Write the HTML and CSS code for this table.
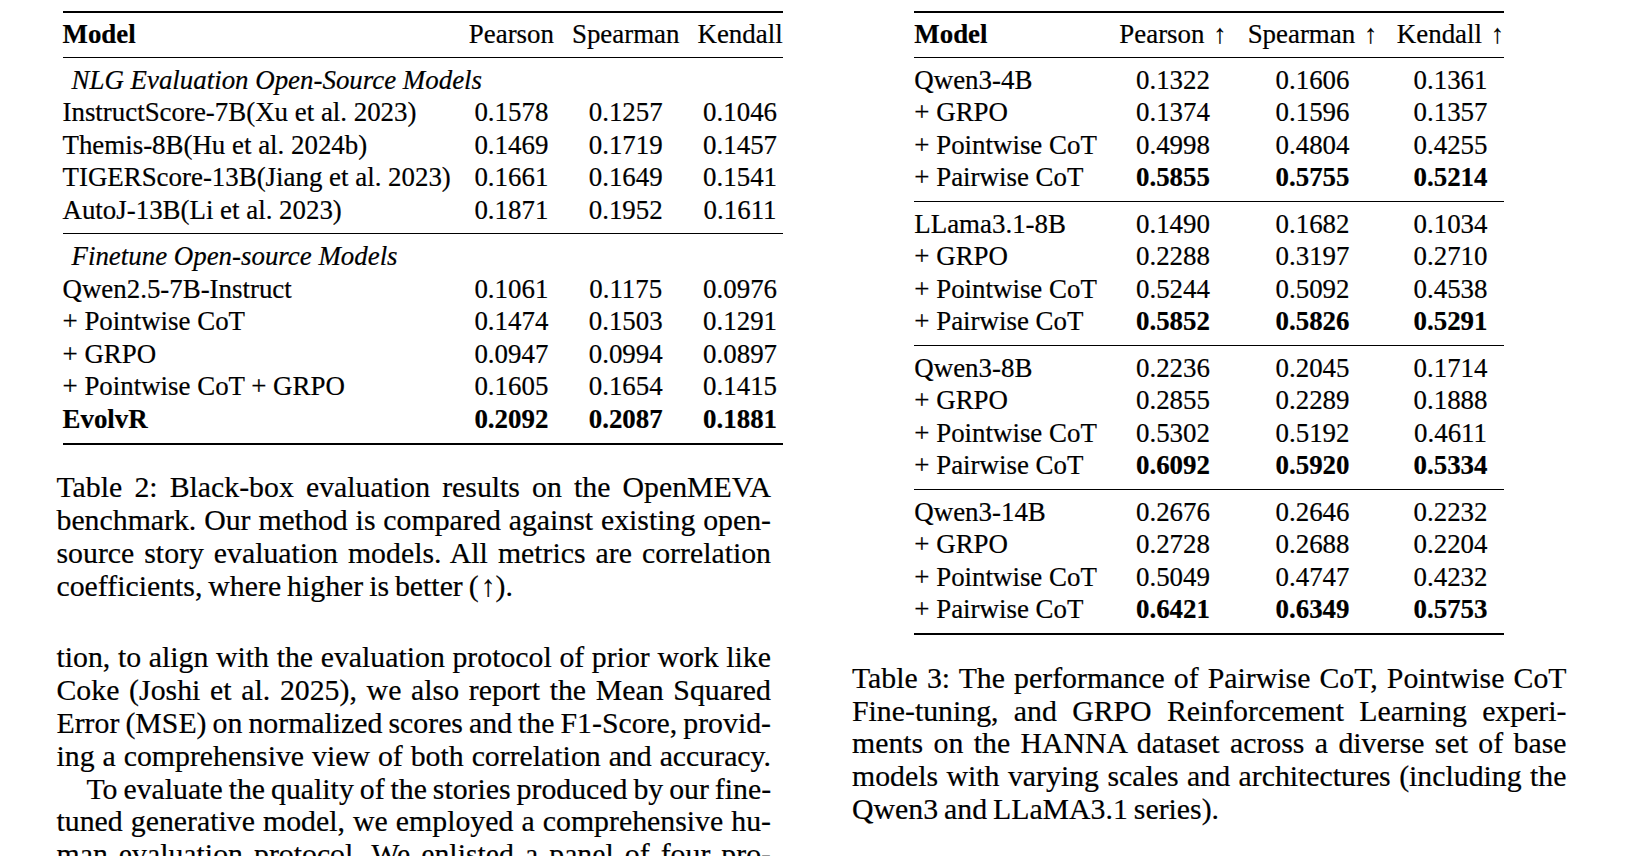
FILE: index.html
```html
<!DOCTYPE html>
<html lang="en">
<head>
<meta charset="utf-8">
<title>Tables 2 and 3</title>
<link rel="stylesheet" href="styles.css">
</head>
<body>
<div class="page">
  <div class="col col-left">
    <table class="tbl tbl-2">
      <thead>
        <tr><th class="b">Model</th><th>Pearson</th><th>Spearman</th><th>Kendall</th></tr>
      </thead>
      <tbody>
        <tr><td colspan="4" class="grp">NLG Evaluation Open-Source Models</td></tr>
        <tr><td>InstructScore-7B(Xu et al. 2023)</td><td>0.1578</td><td>0.1257</td><td>0.1046</td></tr>
        <tr><td>Themis-8B(Hu et al. 2024b)</td><td>0.1469</td><td>0.1719</td><td>0.1457</td></tr>
        <tr><td>TIGERScore-13B(Jiang et al. 2023)</td><td>0.1661</td><td>0.1649</td><td>0.1541</td></tr>
        <tr><td>AutoJ-13B(Li et al. 2023)</td><td>0.1871</td><td>0.1952</td><td>0.1611</td></tr>
      </tbody>
      <tbody>
        <tr><td colspan="4" class="grp">Finetune Open-source Models</td></tr>
        <tr><td>Qwen2.5-7B-Instruct</td><td>0.1061</td><td>0.1175</td><td>0.0976</td></tr>
        <tr><td>+ Pointwise CoT</td><td>0.1474</td><td>0.1503</td><td>0.1291</td></tr>
        <tr><td>+ GRPO</td><td>0.0947</td><td>0.0994</td><td>0.0897</td></tr>
        <tr><td>+ Pointwise CoT + GRPO</td><td>0.1605</td><td>0.1654</td><td>0.1415</td></tr>
        <tr class="b"><td>EvolvR</td><td>0.2092</td><td>0.2087</td><td>0.1881</td></tr>
      </tbody>
    </table>

    <p class="cap">
      <span class="ln">Table 2: Black-box evaluation results on the OpenMEVA</span>
      <span class="ln">benchmark. Our method is compared against existing open-</span>
      <span class="ln">source story evaluation models. All metrics are correlation</span>
      <span class="ln end">coefficients, where higher is better (<span class="arrow">↑</span>).</span>
    </p>

    <div class="txt">
      <p>
        <span class="ln">tion, to align with the evaluation protocol of prior work like</span>
        <span class="ln">Coke (Joshi et al. 2025), we also report the Mean Squared</span>
        <span class="ln">Error (MSE) on normalized scores and the F1-Score, provid-</span>
        <span class="ln">ing a comprehensive view of both correlation and accuracy.</span>
      </p>
      <p class="indent">
        <span class="ln">To evaluate the quality of the stories produced by our fine-</span>
        <span class="ln">tuned generative model, we employed a comprehensive hu-</span>
        <span class="ln">man evaluation protocol. We enlisted a panel of four pro-</span>
      </p>
    </div>
  </div>

  <div class="col col-right">
    <table class="tbl tbl-3">
      <thead>
        <tr><th class="b">Model</th><th>Pearson <span class="arrow">↑</span></th><th>Spearman <span class="arrow">↑</span></th><th>Kendall <span class="arrow">↑</span></th></tr>
      </thead>
      <tbody>
        <tr><td>Qwen3-4B</td><td>0.1322</td><td>0.1606</td><td>0.1361</td></tr>
        <tr><td>+ GRPO</td><td>0.1374</td><td>0.1596</td><td>0.1357</td></tr>
        <tr><td>+ Pointwise CoT</td><td>0.4998</td><td>0.4804</td><td>0.4255</td></tr>
        <tr><td>+ Pairwise CoT</td><td class="b">0.5855</td><td class="b">0.5755</td><td class="b">0.5214</td></tr>
      </tbody>
      <tbody>
        <tr><td>LLama3.1-8B</td><td>0.1490</td><td>0.1682</td><td>0.1034</td></tr>
        <tr><td>+ GRPO</td><td>0.2288</td><td>0.3197</td><td>0.2710</td></tr>
        <tr><td>+ Pointwise CoT</td><td>0.5244</td><td>0.5092</td><td>0.4538</td></tr>
        <tr><td>+ Pairwise CoT</td><td class="b">0.5852</td><td class="b">0.5826</td><td class="b">0.5291</td></tr>
      </tbody>
      <tbody>
        <tr><td>Qwen3-8B</td><td>0.2236</td><td>0.2045</td><td>0.1714</td></tr>
        <tr><td>+ GRPO</td><td>0.2855</td><td>0.2289</td><td>0.1888</td></tr>
        <tr><td>+ Pointwise CoT</td><td>0.5302</td><td>0.5192</td><td>0.4611</td></tr>
        <tr><td>+ Pairwise CoT</td><td class="b">0.6092</td><td class="b">0.5920</td><td class="b">0.5334</td></tr>
      </tbody>
      <tbody>
        <tr><td>Qwen3-14B</td><td>0.2676</td><td>0.2646</td><td>0.2232</td></tr>
        <tr><td>+ GRPO</td><td>0.2728</td><td>0.2688</td><td>0.2204</td></tr>
        <tr><td>+ Pointwise CoT</td><td>0.5049</td><td>0.4747</td><td>0.4232</td></tr>
        <tr><td>+ Pairwise CoT</td><td class="b">0.6421</td><td class="b">0.6349</td><td class="b">0.5753</td></tr>
      </tbody>
    </table>

    <p class="cap">
      <span class="ln">Table 3: The performance of Pairwise CoT, Pointwise CoT</span>
      <span class="ln">Fine-tuning, and GRPO Reinforcement Learning experi-</span>
      <span class="ln">ments on the HANNA dataset across a diverse set of base</span>
      <span class="ln">models with varying scales and architectures (including the</span>
      <span class="ln end">Qwen3 and LLaMA3.1 series).</span>
    </p>
  </div>
</div>
</body>
</html>
```

FILE: styles.css
```css
* {
  margin: 0;
  padding: 0;
  box-sizing: border-box;
}

html, body {
  width: 1632px;
  height: 856px;
  overflow: hidden;
  background: #ffffff;
}

body {
  font-family: "Liberation Serif", "Times New Roman", serif;
  font-size: 29.8px;
  line-height: 32.85px;
  word-spacing: -1.5px;
  color: #000000;
  -webkit-text-stroke: 0.2px #000000;
}

.page {
  display: flex;
  gap: 81px;
  padding-left: 56.5px;
}

.col {
  width: 714.5px;
  flex: none;
}

/* ---------- tables ---------- */
.tbl {
  border-collapse: collapse;
  font-size: 26.9px;
  line-height: 32.5px;
  word-spacing: 0;
  border-top: 2px solid #000;
  border-bottom: 2px solid #000;
  margin-top: 10.7px;
}

.col-left .tbl {
  margin-left: 6px;
}

.col-right .tbl {
  margin-left: auto;
  margin-right: auto;
}

.tbl th,
.tbl td {
  padding: 0 9px;
  white-space: nowrap;
  text-align: center;
  font-weight: normal;
}

.tbl-3 th,
.tbl-3 td {
  padding-left: 10.5px;
  padding-right: 10.5px;
}

.tbl th:first-child,
.tbl td:first-child {
  padding-left: 0;
  text-align: left;
}

.tbl-3 th:first-child,
.tbl-3 td:first-child {
  padding-right: 12px;
}

.tbl th:last-child,
.tbl td:last-child {
  padding-right: 0;
}

.tbl-3 th:last-child,
.tbl-3 td:last-child {
  padding-left: 9px;
}

.tbl thead tr {
  border-bottom: 1px solid #000;
}

.tbl thead th {
  padding-top: 5px;
  padding-bottom: 6.5px;
}

.tbl tbody + tbody {
  border-top: 1px solid #000;
}

.tbl tbody tr:first-child td {
  padding-top: 6px;
}

.tbl tbody tr:last-child td {
  padding-bottom: 7px;
}

.tbl tbody:last-child tr:last-child td {
  padding-bottom: 7.6px;
}

.tbl td.grp {
  font-style: italic;
  padding-left: 9px;
}

.tbl .b,
.tbl tr.b td {
  font-weight: bold;
}

.arrow {
  font-weight: normal;
  margin-left: 2px;
}

/* ---------- captions and running text ---------- */
.cap {
  margin-top: 26.5px;
}

.txt {
  margin-top: 38.5px;
}

.ln {
  display: block;
  text-align: justify;
  text-align-last: justify;
  white-space: nowrap;
}

.ln.end {
  text-align-last: left;
}

.indent .ln:first-child {
  text-indent: 30px;
}
```
